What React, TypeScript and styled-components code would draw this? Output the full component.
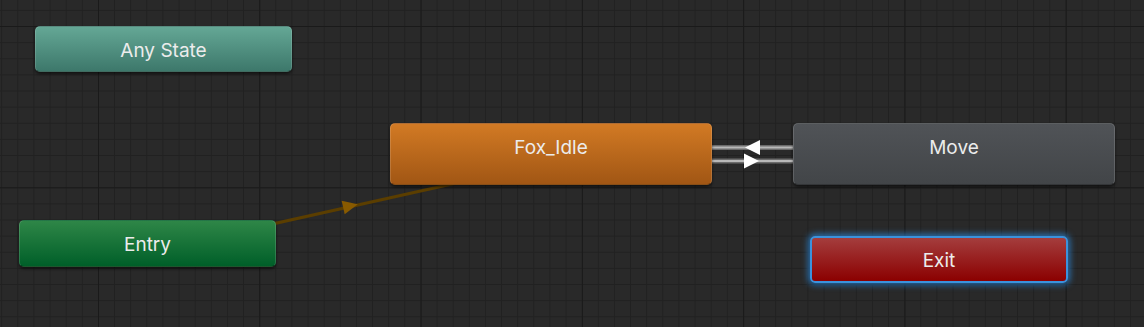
import React from "react";
import styled, { createGlobalStyle, css } from "styled-components";

const GlobalStyle = createGlobalStyle`
  html, body {
    margin: 0;
    padding: 0;
    background: #282828;
  }
`;

// grid: minor cell ~16.13px, major every 10 cells, major lines cross at (98, 26)
const Canvas = styled.div`
  position: relative;
  width: 1144px;
  height: 327px;
  overflow: hidden;
  background-color: #292929;
  background-image:
    linear-gradient(to right, #1a1a1a 1px, transparent 1px),
    linear-gradient(to bottom, #1a1a1a 1px, transparent 1px),
    linear-gradient(to right, #212121 1px, transparent 1px),
    linear-gradient(to bottom, #212121 1px, transparent 1px);
  background-size:
    161.3px 161.3px,
    161.3px 161.3px,
    16.13px 16.13px,
    16.13px 16.13px;
  background-position:
    98px 26px,
    98px 26px,
    1.2px 9.9px,
    1.2px 9.9px;
  font-family: Inter, "Noto Sans", "DejaVu Sans", sans-serif;
`;

const Edges = styled.svg`
  position: absolute;
  left: 0;
  top: 0;
  pointer-events: none;
`;

type Kind = "any" | "default" | "state" | "entry" | "exit";

const fills: Record<Kind, string> = {
  any: "linear-gradient(to bottom, #64a795, #3d786b)",
  default: "linear-gradient(to bottom, #d27a24, #a15614)",
  state: "linear-gradient(to bottom, #505357, #424548)",
  entry: "linear-gradient(to bottom, #2e8647, #005f29)",
  exit: "linear-gradient(to bottom, #a43d3d, #8b0000)",
};

const Node = styled.div<{ $kind: Kind; $x: number; $y: number; $w: number; $h: number }>`
  position: absolute;
  left: ${(p) => p.$x}px;
  top: ${(p) => p.$y}px;
  width: ${(p) => p.$w}px;
  height: ${(p) => p.$h}px;
  box-sizing: border-box;
  display: flex;
  justify-content: center;
  align-items: flex-start;
  padding-top: 12px;
  border-radius: 5px;
  background: ${(p) => fills[p.$kind]};
  border: 1px solid rgba(255, 255, 255, 0.14);
  border-bottom-color: rgba(0, 0, 0, 0.35);
  box-shadow: 0 2px 3px rgba(0, 0, 0, 0.55);
  color: #ececec;
  font-size: 19px;
  font-weight: 400;
  line-height: 23px;
  ${(p) =>
    p.$kind === "exit" &&
    css`
      border: 2px solid #3b92dc;
      box-shadow: 0 0 6px 2px rgba(44, 127, 200, 0.85), 0 2px 3px rgba(0, 0, 0, 0.5);
      padding-top: 11px;
    `}
`;

const Label = styled.span`
  white-space: nowrap;
`;

const angle = (Math.atan2(-38, 170) * 180) / Math.PI;

const App = () => {
  return (
    <>
      <GlobalStyle />
      <Canvas>
        <Edges width={1144} height={327} viewBox="0 0 1144 327">
          {/* Entry -> Fox_Idle */}
          <line x1={250} y1={229} x2={470} y2={180} stroke="#5b3e00" strokeWidth={3} />
          <polygon
            points="-7,-7 8,0 -7,7"
            fill="#885a00"
            transform={`translate(350 206) rotate(${angle})`}
          />
          {/* Fox_Idle <-> Move */}
          <line x1={700} y1={147.5} x2={800} y2={147.5} stroke="#6c6c6c" strokeWidth={5} />
          <line x1={700} y1={147.5} x2={800} y2={147.5} stroke="#b9b9b9" strokeWidth={2} />
          <line x1={700} y1={161} x2={800} y2={161} stroke="#6c6c6c" strokeWidth={5} />
          <line x1={700} y1={161} x2={800} y2={161} stroke="#b9b9b9" strokeWidth={2} />
          <polygon points="745,147.5 760,140 760,155" fill="#ffffff" />
          <polygon points="759,161 744,153.5 744,168.5" fill="#ffffff" />
        </Edges>

        <Node $kind="any" $x={35} $y={26} $w={257} $h={46}>
          <Label>Any State</Label>
        </Node>
        <Node $kind="default" $x={390} $y={123} $w={322} $h={62}>
          <Label>Fox_Idle</Label>
        </Node>
        <Node $kind="state" $x={793} $y={123} $w={322} $h={62}>
          <Label>Move</Label>
        </Node>
        <Node $kind="entry" $x={19} $y={220} $w={257} $h={47}>
          <Label>Entry</Label>
        </Node>
        <Node $kind="exit" $x={810} $y={236} $w={258} $h={47}>
          <Label>Exit</Label>
        </Node>
      </Canvas>
    </>
  );
};

export default App;
